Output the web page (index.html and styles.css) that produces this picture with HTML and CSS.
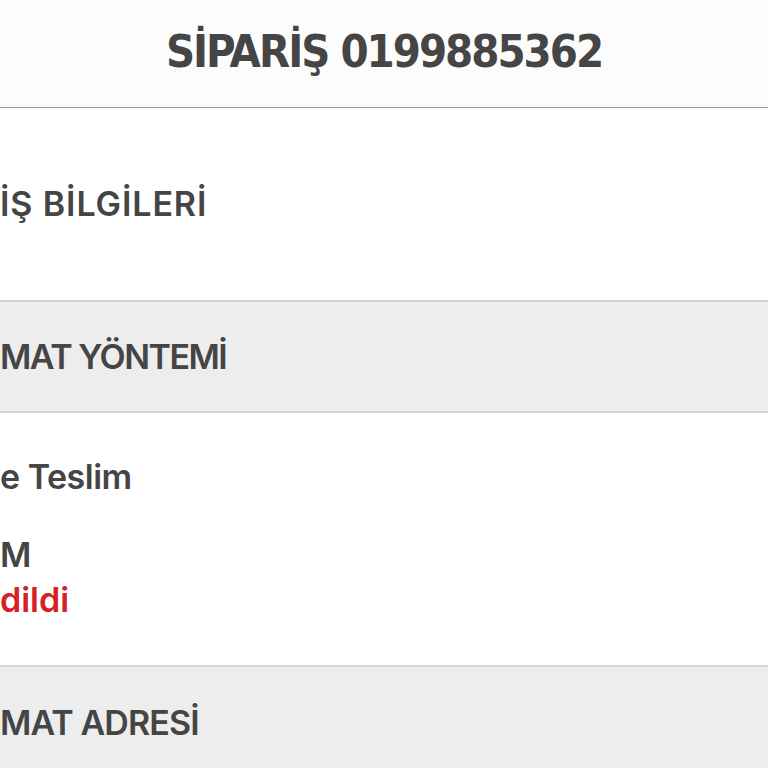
FILE: index.html
```html
<!DOCTYPE html>
<html lang="tr">
<head>
    <meta charset="UTF-8">
    <meta name="viewport" content="width=device-width, initial-scale=1.0">
    <title>Sipariş 0199885362</title>
    <link rel="stylesheet" href="styles.css">
</head>
<body>
    <header class="page-header">
        <h1>SİPARİŞ 0199885362</h1>
    </header>

    <section class="info">
        <h2 class="info-title">İŞ BİLGİLERİ</h2>
    </section>

    <div class="band">
        <h2 class="method-title">MAT YÖNTEMİ</h2>
    </div>

    <section class="delivery">
        <p class="method">e Teslim</p>
        <p class="status-label">M</p>
        <p class="status">dildi</p>
    </section>

    <div class="band band-last">
        <h2 class="address-title">MAT ADRESİ</h2>
    </div>
</body>
</html>
```

FILE: styles.css
```css
html, body {
    margin: 0;
    padding: 0;
    height: 100%;
    overflow: hidden;
}
body {
    font-family: Inter, "Noto Sans", sans-serif;
    color: #454545;
    background: #fff;
}
h1, h2, p {
    margin: 0;
    font-size: 34px;
    line-height: 34px;
    font-weight: 600;
    white-space: nowrap;
}
.page-header {
    height: 108px;
    box-sizing: border-box;
    padding-top: 29px;
    background: #fcfcfc;
    border-bottom: 1px solid #9a9a9a;
    text-align: center;
}
.page-header h1 {
    font-family: "DejaVu Sans", sans-serif;
    font-stretch: condensed;
    font-weight: bold;
    font-size: 45px;
    line-height: 45px;
    letter-spacing: -2px;
    color: #454545;
}
.info {
    height: 194px;
    box-sizing: border-box;
    padding-top: 79px;
    border-bottom: 2px solid #d2d2d2;
}
.info-title {
    letter-spacing: 0.9px;
}
.band {
    height: 111px;
    box-sizing: border-box;
    padding-top: 38px;
    background: #ededed;
    border-bottom: 2px solid #d4d4d4;
}
.method-title {
    letter-spacing: -1.5px;
}
.band-last {
    height: auto;
    min-height: 101px;
    padding-top: 39px;
    border-bottom: none;
}
.address-title {
    letter-spacing: -0.9px;
}
.delivery {
    height: 254px;
    box-sizing: border-box;
    padding-top: 47px;
    border-bottom: 2px solid #d6d6d6;
}
.method {
    letter-spacing: -0.5px;
}
.status-label {
    margin-top: 44px;
}
.status {
    margin-top: 11px;
    color: #d42121;
}
```
